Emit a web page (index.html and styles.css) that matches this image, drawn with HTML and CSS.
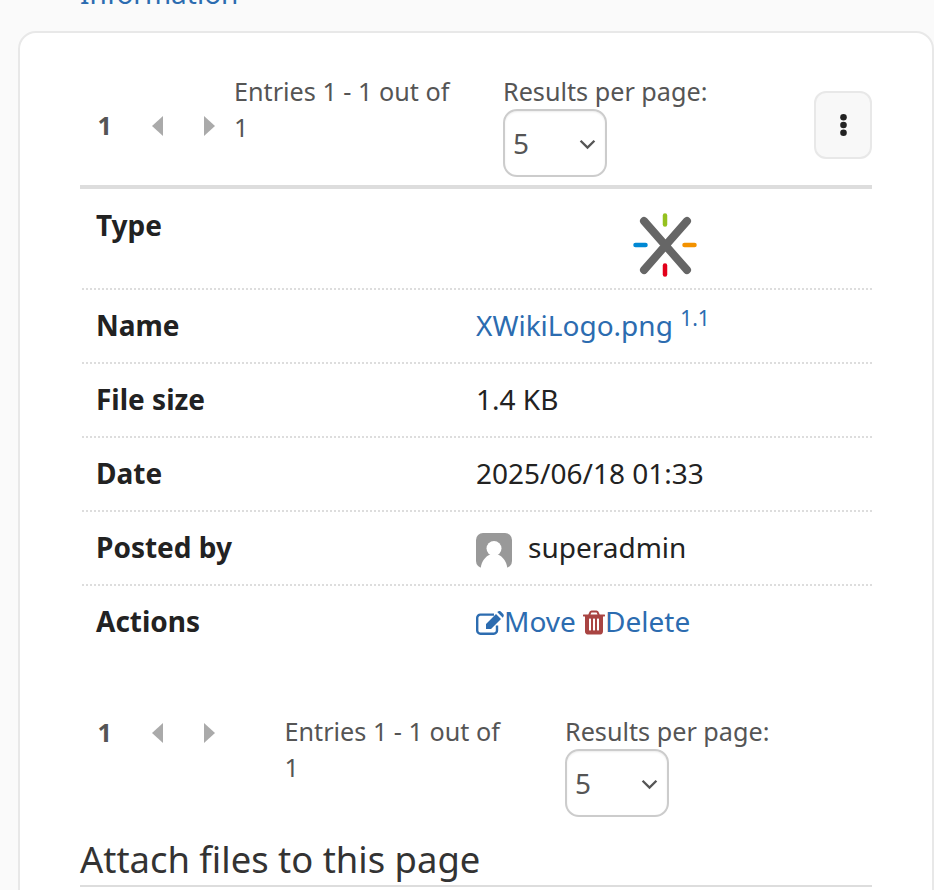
FILE: index.html
```html
<!DOCTYPE html>
<html lang="en">
<head>
<meta charset="utf-8">
<title>Attachments</title>
<link rel="stylesheet" href="styles.css">
</head>
<body>
<a class="top-link" href="#">Information</a>
<main class="card">
  <div class="pager pager-top">
    <div class="pages">
      <b class="page-num">1</b>
      <svg class="arrow arrow-prev" viewBox="0 0 12 20"><path d="M11 0v20L0 10z"/></svg>
      <svg class="arrow arrow-next" viewBox="0 0 12 20"><path d="M1 0v20l11-10z"/></svg>
    </div>
    <div class="entries">Entries 1 - 1 out of 1</div>
    <div class="per-page">
      <div class="per-label">Results per page:</div>
      <div class="select"><span>5</span>
        <svg class="chev" viewBox="0 0 16 10"><path d="M1.500 1.500 8 8l6.500-6.500"/></svg>
      </div>
    </div>
    <button class="more" type="button" aria-label="More">
      <svg viewBox="0 0 7 22"><circle cx="3.500" cy="3.300" r="3.300"/><circle cx="3.500" cy="11" r="3.300"/><circle cx="3.500" cy="18.700" r="3.300"/></svg>
    </button>
  </div>

  <div class="details">
    <div class="row row-type">
      <div class="label">Type</div>
      <div class="value">
        <svg class="logo" viewBox="0 0 64 64">
          <path class="logo-x" d="M11 8 54 57M54 8 11 57"/>
          <path class="logo-g" d="M32 2.500v9"/>
          <path class="logo-r" d="M32 52.500v9"/>
          <path class="logo-b" d="M2.500 32h10"/>
          <path class="logo-o" d="M51.500 32h10"/>
        </svg>
      </div>
    </div>
    <div class="row">
      <div class="label">Name</div>
      <div class="value"><a href="#">XWikiLogo.png</a> <sup class="version"><a href="#">1.1</a></sup></div>
    </div>
    <div class="row">
      <div class="label">File size</div>
      <div class="value">1.4 KB</div>
    </div>
    <div class="row">
      <div class="label">Date</div>
      <div class="value">2025/06/18 01:33</div>
    </div>
    <div class="row">
      <div class="label">Posted by</div>
      <div class="value">
        <span class="user">
          <svg class="avatar" viewBox="0 0 36 36">
            <rect width="36" height="35" rx="7" fill="#999"/>
            <circle cx="18" cy="15.500" r="7.500" fill="#fff"/>
            <path d="M4.500 36c1-9 6.500-15 13.500-15s12.500 6 13.500 15z" fill="#fff"/>
          </svg>
          superadmin
        </span>
      </div>
    </div>
    <div class="row row-last">
      <div class="label">Actions</div>
      <div class="value actions">
        <a href="#"><svg class="ico" viewBox="0 0 28 24"><path class="edit-box" d="M21 14.500v5a3.200 3.200 0 0 1-3.200 3.200H4.400a3.200 3.200 0 0 1-3.200-3.200V6.800a3.200 3.200 0 0 1 3.200-3.200H18"/><path class="edit-pen" d="M10 13 20 3l5 5-10 10h-5zM21.200.9l1.300-.7a2 2 0 0 1 2.300.4l2.400 2.400a2 2 0 0 1 .3 2.400l-.7 1.300z"/></svg>Move</a>
        <a href="#"><svg class="ico ico-del" viewBox="0 0 1408 1536"><path d="M512 1248V544q0-14-9-23t-23-9h-64q-14 0-23 9t-9 23v704q0 14 9 23t23 9h64q14 0 23-9t9-23zm256 0V544q0-14-9-23t-23-9h-64q-14 0-23 9t-9 23v704q0 14 9 23t23 9h64q14 0 23-9t9-23zm256 0V544q0-14-9-23t-23-9h-64q-14 0-23 9t-9 23v704q0 14 9 23t23 9h64q14 0 23-9t9-23zM480 256h448l-48-117q-7-9-17-11H546q-10 2-17 11zm928 32v64q0 14-9 23t-23 9h-96v948q0 83-47 143.500t-113 60.500H288q-66 0-113-58.500T128 1336V384H32q-14 0-23-9t-9-23v-64q0-14 9-23t23-9h309l70-167q15-37 54-63t79-26h320q40 0 79 26t54 63l70 167h309q14 0 23 9t9 23z"/></svg>Delete</a>
      </div>
    </div>
  </div>

  <div class="pager pager-bottom">
    <div class="pages">
      <b class="page-num">1</b>
      <svg class="arrow arrow-prev" viewBox="0 0 12 20"><path d="M11 0v20L0 10z"/></svg>
      <svg class="arrow arrow-next" viewBox="0 0 12 20"><path d="M1 0v20l11-10z"/></svg>
    </div>
    <div class="entries">Entries 1 - 1 out of 1</div>
    <div class="per-page">
      <div class="per-label">Results per page:</div>
      <div class="select"><span>5</span>
        <svg class="chev" viewBox="0 0 16 10"><path d="M1.500 1.500 8 8l6.500-6.500"/></svg>
      </div>
    </div>
  </div>

  <h2 class="section-title">Attach files to this page</h2>
</main>
</body>
</html>
```

FILE: styles.css
```css
html, body {
  margin: 0;
  padding: 0;
  height: 890px;
  overflow: hidden;
  background: #fafafa;
}
body {
  font-family: "Noto Sans", sans-serif;
  font-size: 28px;
  line-height: 40px;
  color: #222;
}
a {
  color: #2c6cb0;
  text-decoration: none;
}
.top-link {
  display: block;
  height: 31px;
  margin-top: -27px;
  padding: 0 0 27px 80px;
}
.card {
  margin-left: 18px;
  width: 916px;
  height: 900px;
  box-sizing: border-box;
  background: #fff;
  border: 2px solid #e8e8e8;
  border-radius: 18px;
  padding: 0 60px;
}
.pager {
  display: flex;
  align-items: flex-start;
  color: #555;
  font-size: 25.200px;
  line-height: 36px;
}
.pager-top {
  padding-top: 40px;
  height: 152px;
  box-sizing: border-box;
}
.pager-bottom {
  margin-top: 53px;
  height: 121px;
}
.pages {
  display: flex;
  align-items: center;
  width: 154px;
  height: 36px;
  margin-top: 34px;
  flex: none;
}
.pager-bottom .pages {
  width: 204.500px;
  margin-top: 1px;
}
.page-num {
  margin-left: 17.500px;
  width: 48.500px;
  color: #555;
  font-size: 25.200px;
}
.arrow {
  width: 12px;
  height: 20px;
  margin-top: 2px;
  fill: #aaa;
  flex: none;
}
.arrow-prev {
  margin-left: 6px;
}
.arrow-next {
  margin-left: 39px;
}
.entries {
  width: 220px;
  margin-right: 49px;
  flex: none;
}
.pager-bottom .entries {
  margin-right: 60.500px;
}
.select {
  width: 104px;
  height: 68px;
  box-sizing: border-box;
  border: 2px solid #ccc;
  border-radius: 14px;
  padding: 0 9px 0 8px;
  display: flex;
  align-items: center;
  justify-content: space-between;
  background: #fff;
  font-size: 28px;
  box-shadow: inset 0 1px 2px rgba(0, 0, 0, 0.08);
}
.chev {
  width: 17px;
  height: 11px;
  margin-top: 2px;
  fill: none;
  stroke: #555;
  stroke-width: 2.200;
}
.more {
  margin-left: auto;
  margin-top: 18px;
  width: 58px;
  height: 68px;
  padding: 0;
  background: #f8f8f8;
  border: 2px solid #e8e8e8;
  border-radius: 12px;
  display: flex;
  align-items: center;
  justify-content: center;
}
.more svg {
  width: 7px;
  height: 22px;
  fill: #222;
}
.details {
  border-top: 4px solid #ddd;
}
.row {
  display: grid;
  grid-template-columns: 379px 1fr;
  margin-left: 2px;
  height: 74px;
  box-sizing: border-box;
  padding-top: 15px;
  border-bottom: 2px dotted #ddd;
}
.row-type {
  height: 101px;
  padding-top: 16px;
}
.row-last {
  border-bottom: 0;
}
.label {
  padding-left: 14px;
  font-weight: 700;
}
.value {
  padding: 0 15px;
  white-space: nowrap;
}
.row-type .value {
  padding-top: 8px;
}
.logo {
  display: block;
  width: 64px;
  height: 64px;
  margin: 0 auto;
  position: relative;
  left: -2px;
}
.logo path {
  fill: none;
  stroke-linecap: round;
}
.logo-x { stroke: #666; stroke-width: 8; }
.logo-g { stroke: #95c11f; stroke-width: 4.500; }
.logo-r { stroke: #e2001a; stroke-width: 4.500; }
.logo-b { stroke: #0088d4; stroke-width: 4.500; }
.logo-o { stroke: #f39200; stroke-width: 4.500; }
.version {
  font-size: 21px;
  line-height: 0;
  vertical-align: baseline;
  position: relative;
  top: -10px;
}
.user {
  display: inline-flex;
  align-items: flex-start;
  gap: 16px;
}
.avatar {
  width: 36px;
  height: 36px;
  margin-top: 6px;
  flex: none;
}
.ico {
  width: 28px;
  height: 24px;
  vertical-align: -3px;
}
.edit-box {
  fill: none;
  stroke: #2c6cb0;
  stroke-width: 2.400;
}
.edit-pen {
  fill: #2c6cb0;
}
.ico-del {
  width: 22px;
  height: 25px;
  fill: #a94442;
}
.section-title {
  margin: 0;
  height: 53px;
  box-sizing: border-box;
  border-bottom: 2px solid #ddd;
  font-size: 36.400px;
  line-height: 50px;
  font-weight: 400;
  color: #333;
}
```
